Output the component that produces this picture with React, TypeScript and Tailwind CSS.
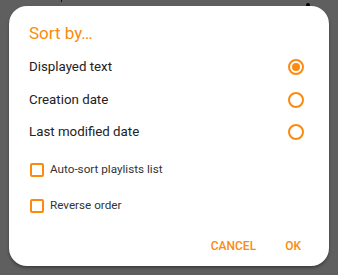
import React from 'react';

const ORANGE = 'text-[#fb8a0e]';

function Radio({ checked }: { checked?: boolean }) {
  return (
    <span className="flex h-4 w-4 items-center justify-center rounded-full border-2 border-[#fb8a0e]">
      {checked && <span className="h-2 w-2 rounded-full bg-[#fb8a0e]" />}
    </span>
  );
}

function RadioRow({ label, checked }: { label: string; checked?: boolean }) {
  return (
    <div className="flex h-[32.5px] items-center justify-between pl-5 pr-[25px]">
      <span className="text-[13.3px] text-[#222]">{label}</span>
      <Radio checked={checked} />
    </div>
  );
}

function CheckRow({ label }: { label: string }) {
  return (
    <div className="flex h-9 items-center gap-[6px] pl-[21px]">
      <span className="h-[14px] w-[14px] rounded-[2px] border-2 border-[#fb8a0e]" />
      <span className="text-[11.7px] text-[#333]">{label}</span>
    </div>
  );
}

export default function App() {
  return (
    <div
      className="relative h-[275px] w-[338px] overflow-hidden bg-[#5f5f5f] pl-[9px] pt-[6px]"
      style={{ fontFamily: 'Roboto, "Noto Sans", sans-serif' }}
    >
      <span className="absolute left-[61px] top-0 h-[2px] w-[1px] bg-[#111]" />
      <span className="absolute left-[306px] top-[3px] h-[4px] w-[4px] rounded-full bg-black" />

      <div className="relative flex h-[260px] w-[320px] flex-col rounded-[18px] bg-white pt-[15px] shadow-[0_2px_3px_rgba(0,0,0,0.35)]">
        <div className={`h-6 pl-5 text-[17px] leading-6 ${ORANGE}`}>Sort by…</div>

        <div className="mt-[6px] flex flex-col">
          <RadioRow label="Displayed text" checked />
          <RadioRow label="Creation date" />
          <RadioRow label="Last modified date" />
        </div>

        <div className="mt-[3px] flex flex-col">
          <CheckRow label="Auto-sort playlists list" />
          <CheckRow label="Reverse order" />
        </div>

        <div className={`mt-[4px] flex h-9 items-center justify-end gap-[29px] pr-[28px] text-[12px] font-medium ${ORANGE}`}>
          <button>CANCEL</button>
          <button>OK</button>
        </div>
      </div>
    </div>
  );
}
